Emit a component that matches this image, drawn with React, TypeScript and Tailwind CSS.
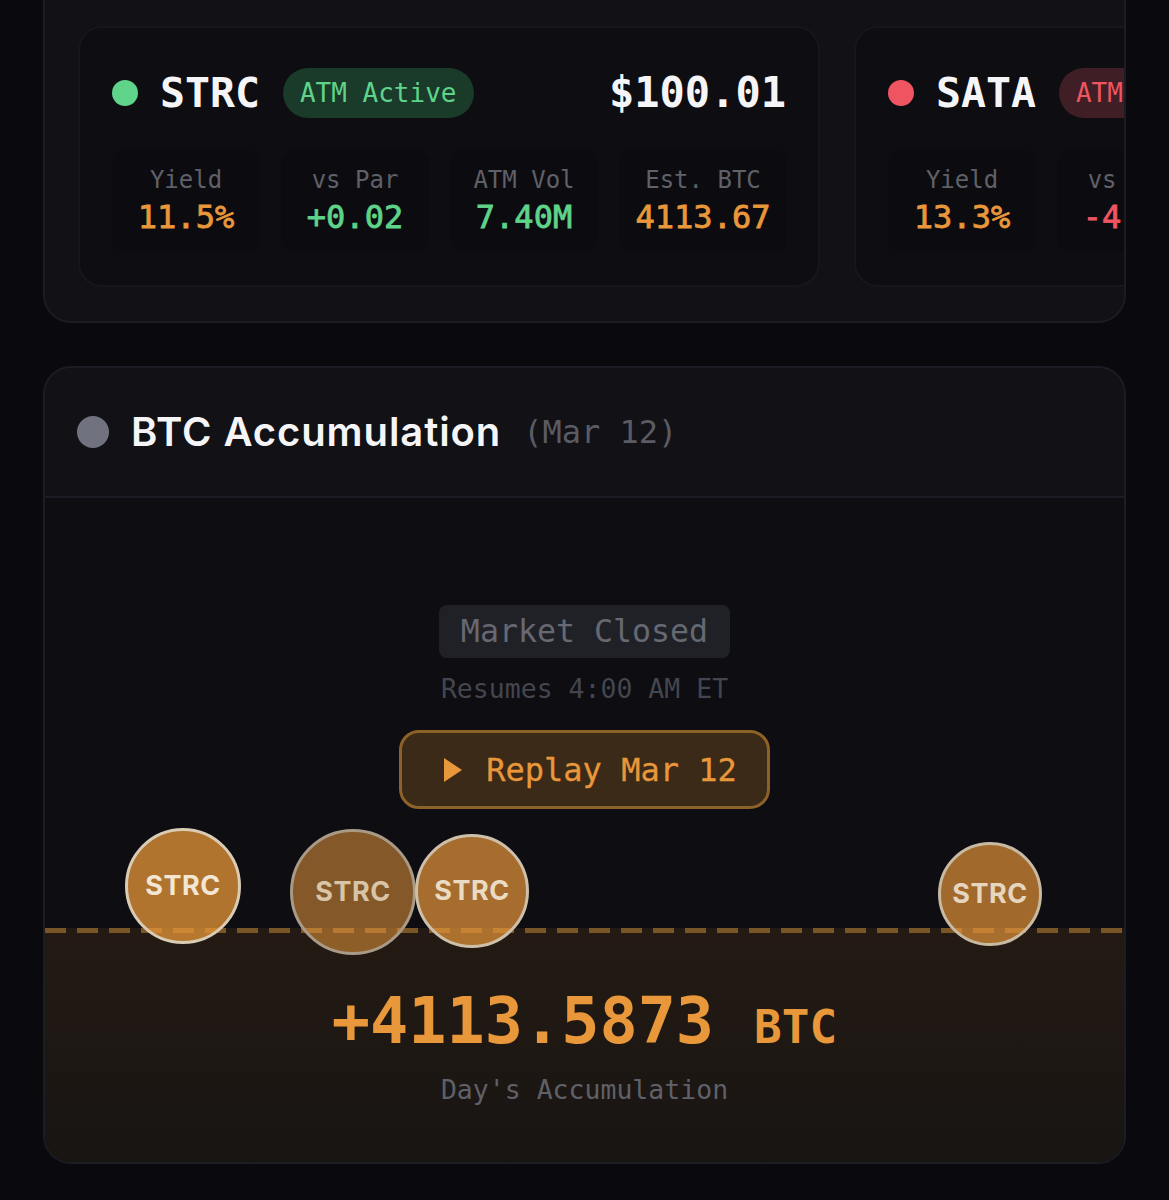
const mono = 'font-["DejaVu_Sans_Mono","Liberation_Mono",monospace]';

type Metric = { label: string; value: string; color: string };

const strcMetrics: Metric[] = [
  { label: 'Yield', value: '11.5%', color: 'text-[#e8973a]' },
  { label: 'vs Par', value: '+0.02', color: 'text-[#5fd38a]' },
  { label: 'ATM Vol', value: '7.40M', color: 'text-[#5fd38a]' },
  { label: 'Est. BTC', value: '4113.67', color: 'text-[#e8973a]' },
];

const sataMetrics: Metric[] = [
  { label: 'Yield', value: '13.3%', color: 'text-[#e8973a]' },
  { label: 'vs Par', value: '-4.21', color: 'text-[#ef5560]' },
  { label: 'ATM Vol', value: '0.00', color: 'text-[#ef5560]' },
  { label: 'Est. BTC', value: '0.00', color: 'text-[#e8973a]' },
];

const coins = [
  { id: 1, className: 'left-[80px] top-[330px] size-[116px] bg-[#e8973a]/75 border-[#d9cbb4] text-[#f3e6d2]' },
  { id: 2, className: 'left-[245px] top-[331px] size-[126px] bg-[#e8973a]/55 border-[#a89a86] text-[#d8c4a6]' },
  { id: 3, className: 'left-[370px] top-[336px] size-[114px] bg-[#e8973a]/70 border-[#cdbfa9] text-[#eadbc4]' },
  { id: 4, className: 'left-[893px] top-[344px] size-[104px] bg-[#e8973a]/68 border-[#c8b9a2] text-[#e6d6bf]' },
];

function TickerCard({
  name,
  badge,
  price,
  metrics,
  dot,
  badgeStyle,
}: {
  name: string;
  badge: string;
  price: string;
  metrics: Metric[];
  dot: string;
  badgeStyle: string;
}) {
  return (
    <div className="w-[742px] h-[261px] shrink-0 rounded-[24px] border-2 border-[#16171d] bg-[#0d0d12] px-[32px] pt-[40px]">
      <div className="flex items-center h-[50px]">
        <span className={`size-[26px] rounded-full ${dot}`} />
        <span className={`${mono} ml-[22px] text-[41.5px] leading-none font-bold text-[#f5f5f7]`}>{name}</span>
        <span className={`${mono} ml-[23px] h-[50px] px-[17px] flex items-center rounded-full text-[26px] whitespace-nowrap ${badgeStyle}`}>
          {badge}
        </span>
        <span className={`${mono} ml-auto text-[42px] leading-none font-bold text-[#f5f5f7]`}>{price}</span>
      </div>
      <div className="mt-[32px] grid grid-cols-[148px_148px_148px_168px] gap-x-[21px]">
        {metrics.map((m) => (
          <div key={m.label} className="h-[102px] rounded-[14px] bg-[#0c0c10] flex flex-col items-center pt-[15px]">
            <span className={`${mono} text-[24px] leading-[30px] text-[#5f6068] whitespace-nowrap`}>{m.label}</span>
            <span className={`${mono} text-[32px] leading-[44px] [-webkit-text-stroke:0.8px_currentColor] ${m.color} whitespace-nowrap`}>{m.value}</span>
          </div>
        ))}
      </div>
    </div>
  );
}

export default function App() {
  return (
    <div className="h-[1200px] overflow-hidden bg-[#09090e] px-[43px]">
      {/* Ticker strip, scrolled partly off the top */}
      <section className="-mt-[40px] h-[363px] rounded-[28px] border-2 border-[#1c1d24] bg-[#111116] pt-[64px] pl-[33px] overflow-hidden">
        <div className="flex gap-[34px]">
          <TickerCard
            name="STRC"
            badge="ATM Active"
            price="$100.01"
            metrics={strcMetrics}
            dot="bg-[#5fd38a]"
            badgeStyle="bg-[#1a3a2a] text-[#5fd38a]"
          />
          <TickerCard
            name="SATA"
            badge="ATM Paused"
            price="$86.02"
            metrics={sataMetrics}
            dot="bg-[#ef5560]"
            badgeStyle="bg-[#3f1f25] text-[#ef5560]"
          />
        </div>
      </section>

      {/* Accumulation panel */}
      <section className="mt-[43px] h-[798px] rounded-[28px] border-2 border-[#1c1d24] bg-[#111116] overflow-hidden flex flex-col">
        <header className="h-[130px] shrink-0 border-b-2 border-[#1c1d24] flex items-center pl-[32px]">
          <span className="size-[32px] rounded-full bg-[#70737f]" />
          <h2 className='ml-[22px] font-["Inter",sans-serif] text-[40px] leading-none font-semibold tracking-[0.9px] text-[#f5f5f7] whitespace-nowrap'>
            BTC Accumulation
          </h2>
          <span className={`${mono} ml-[22px] text-[32px] leading-none text-[#5a5b63] whitespace-nowrap`}>(Mar 12)</span>
        </header>

        <div className="relative flex-1 flex flex-col bg-[#0d0d12]">
          <div className="flex-1 flex flex-col items-center pt-[107px]">
            <div className={`${mono} h-[53px] w-[291px] rounded-[8px] bg-[#202127] flex items-center justify-center text-[31.6px] text-[#666872] whitespace-nowrap`}>
              Market Closed
            </div>
            <div className={`${mono} mt-[15px] text-[26.5px] leading-[32px] text-[#44464f] whitespace-nowrap`}>
              Resumes 4:00 AM ET
            </div>
            <button className={`${mono} mt-[25px] h-[79px] w-[371px] rounded-[20px] border-[3px] border-[#8c6228] bg-[#3b2a17] pl-[12px] flex items-center justify-center gap-[24px] text-[32px] [-webkit-text-stroke:0.3px_currentColor] text-[#e8973a] whitespace-nowrap`}>
              <svg width="18" height="24" viewBox="0 0 18 24" fill="#e8973a">
                <path d="M0 0 L18 12 L0 24 Z" />
              </svg>
              Replay Mar 12
            </button>
          </div>

          <div className="h-[234px] shrink-0 flex flex-col items-center bg-gradient-to-b from-[#241a13] to-[#181513]">
            <div className="h-[5px] w-full bg-[repeating-linear-gradient(90deg,#7a5526_0,#7a5526_21px,transparent_21px,transparent_32px)]" />
            <div className="mt-[48px] flex items-baseline gap-[40px] whitespace-nowrap">
              <span className={`${mono} text-[63.5px] leading-[80px] font-bold text-[#e8973a]`}>+4113.5873</span>
              <span className={`${mono} text-[46px] leading-none font-bold text-[#e8973a]`}>BTC</span>
            </div>
            <div className={`${mono} mt-[13px] text-[26.5px] leading-[32px] text-[#5f6068] whitespace-nowrap`}>
              Day's Accumulation
            </div>
          </div>

          {/* Coins dropped onto the accumulation line */}
          {coins.map((c) => (
            <div
              key={c.id}
              className={`absolute ${c.className} rounded-full border-[3px] flex items-center justify-center font-["Inter",sans-serif] text-[27px] font-bold tracking-[0.5px]`}
            >
              STRC
            </div>
          ))}
        </div>
      </section>
    </div>
  );
}
